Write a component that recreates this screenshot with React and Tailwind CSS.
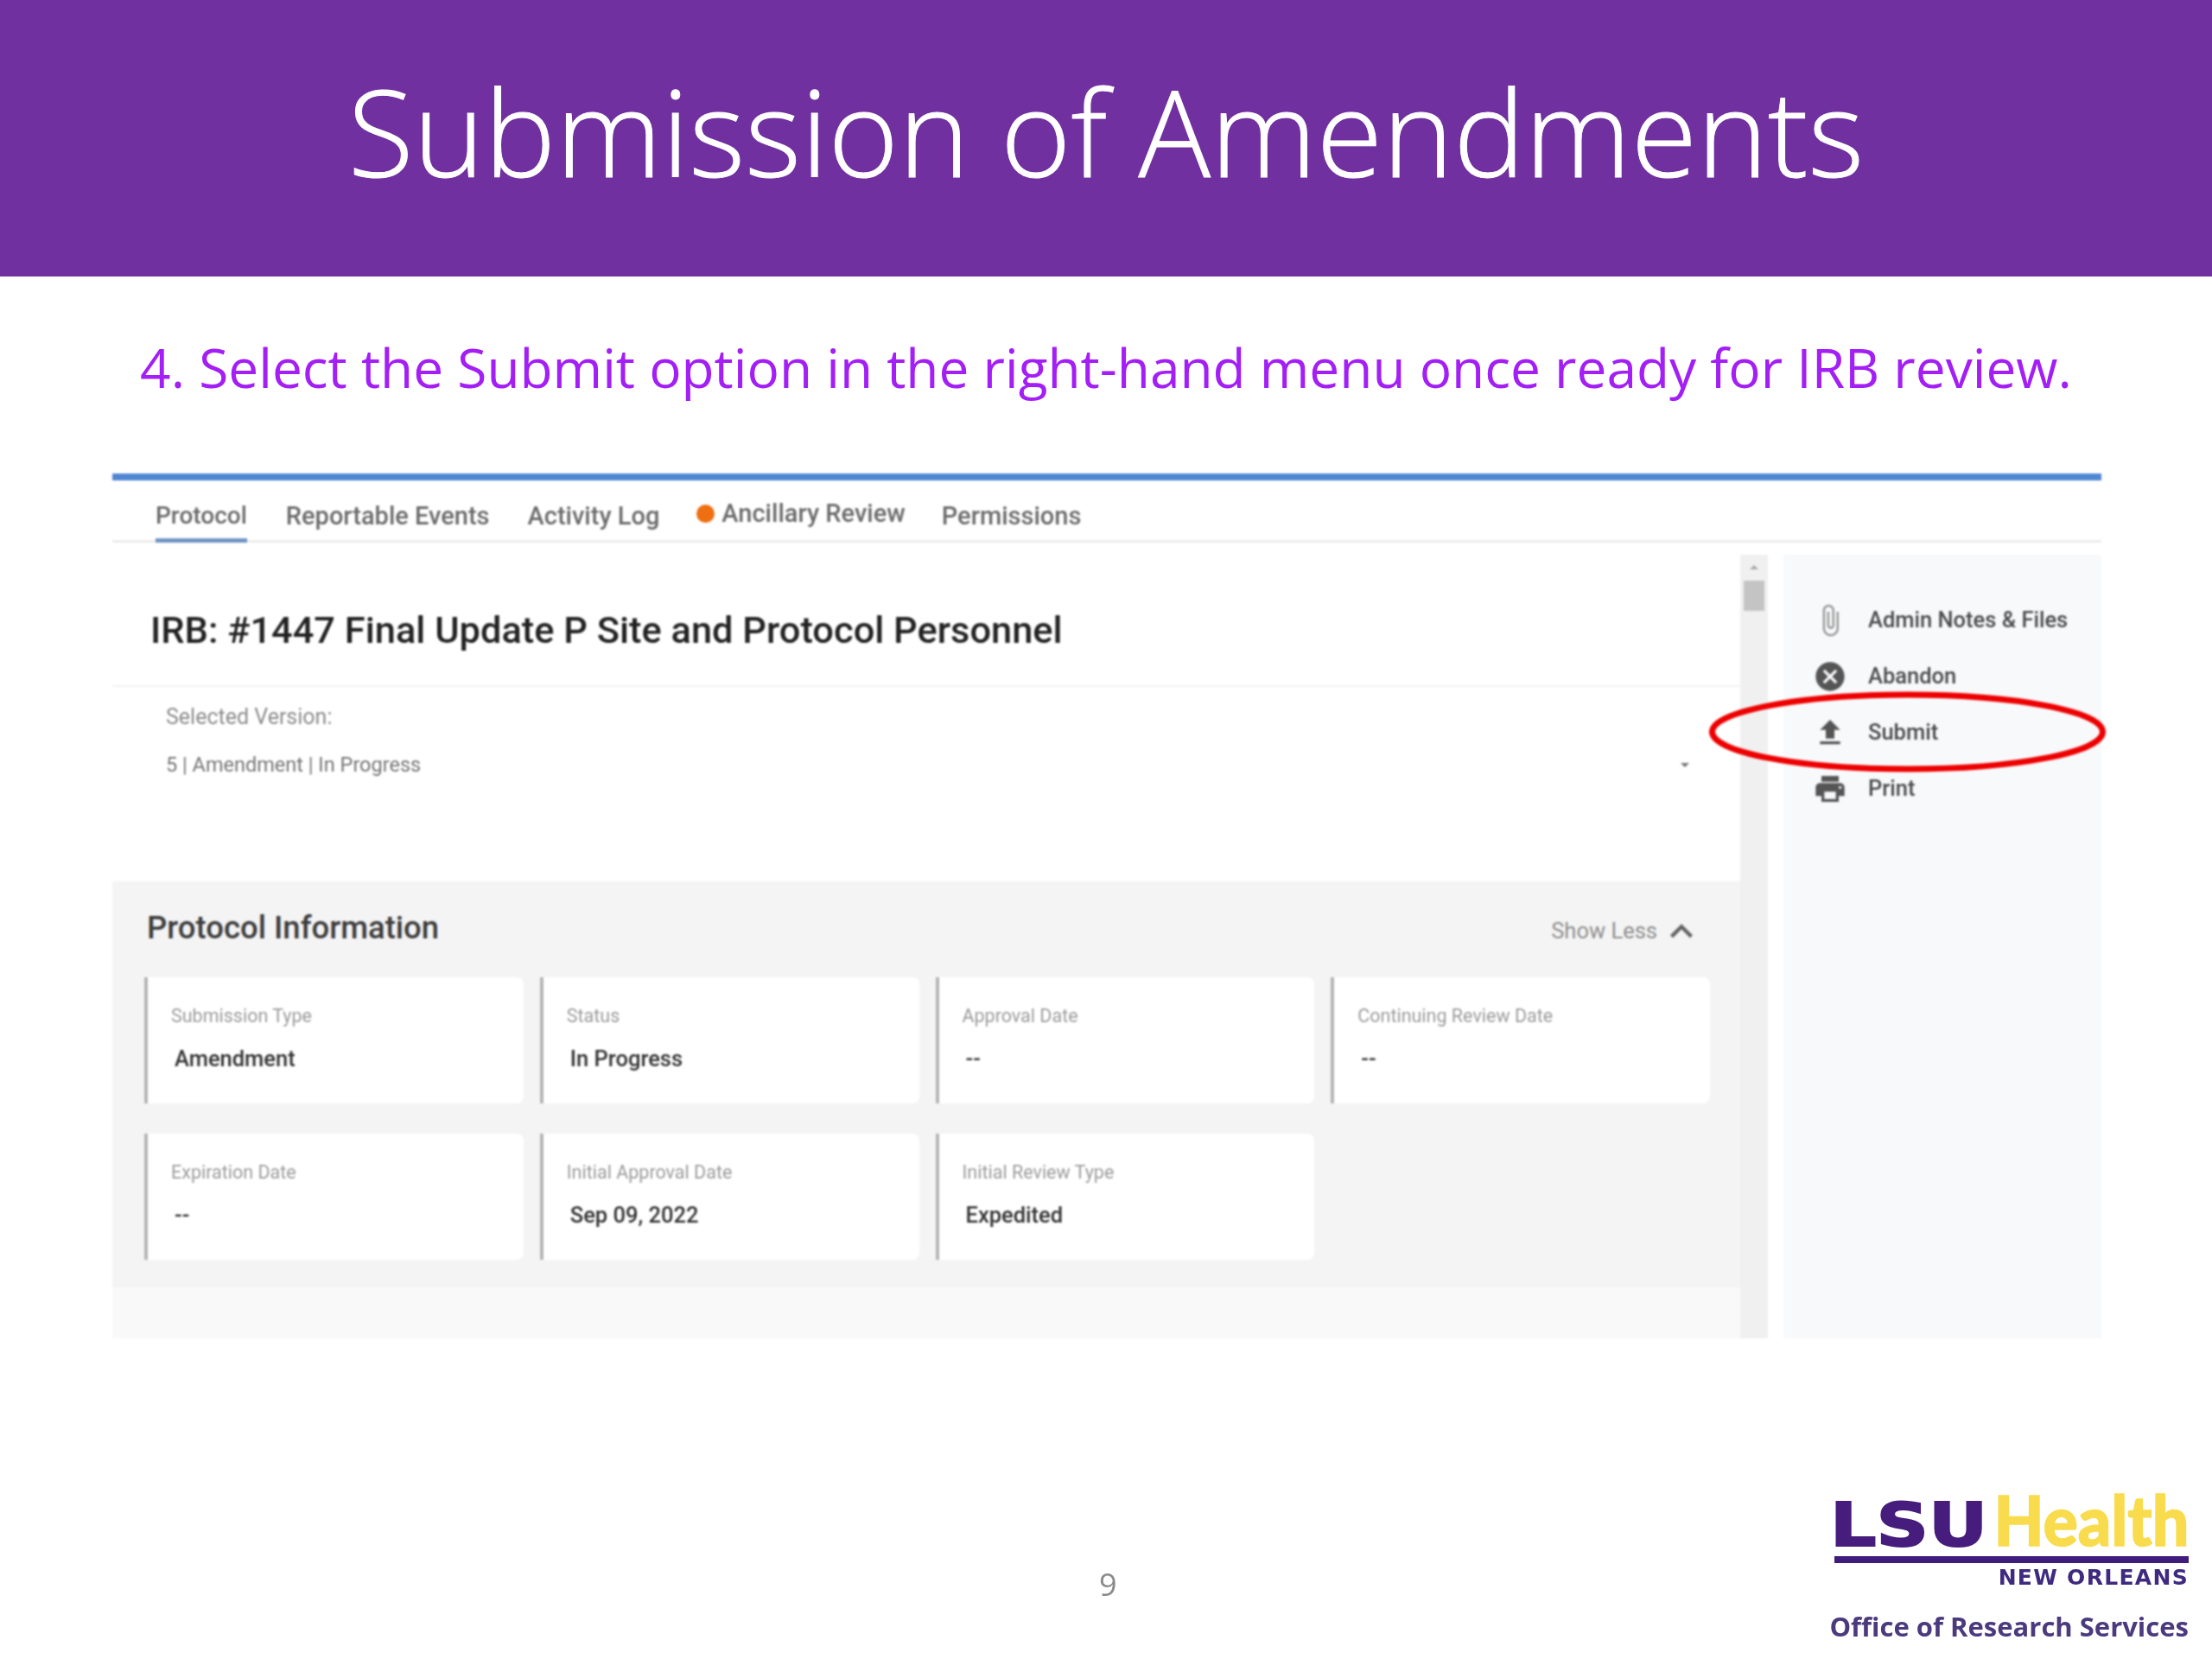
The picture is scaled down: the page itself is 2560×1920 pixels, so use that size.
import React from 'react';
import { MdAttachFile, MdCancel, MdFileUpload, MdPrint, MdKeyboardArrowUp, MdArrowDropDown, MdArrowDropUp } from 'react-icons/md';

const tabs = ['Reportable Events', 'Activity Log'];

const cards = [
  [
    { label: 'Submission Type', value: 'Amendment' },
    { label: 'Status', value: 'In Progress' },
    { label: 'Approval Date', value: '--' },
    { label: 'Continuing Review Date', value: '--' },
  ],
  [
    { label: 'Expiration Date', value: '--' },
    { label: 'Initial Approval Date', value: 'Sep 09, 2022' },
    { label: 'Initial Review Type', value: 'Expedited' },
  ],
];

const menu = [
  { label: 'Admin Notes & Files', icon: MdAttachFile, tone: 'text-[#9a9a9a]' },
  { label: 'Abandon', icon: MdCancel, tone: 'text-[#555555]' },
  { label: 'Submit', icon: MdFileUpload, tone: 'text-[#555555]' },
  { label: 'Print', icon: MdPrint, tone: 'text-[#555555]' },
];

const InfoCard = ({ label, value }) => (
  <div className="h-[146px] bg-white border-l-[4px] border-[#b5b5b5] rounded-r-lg pl-[27px] pt-[30px]">
    <div className="text-[21.5px] leading-[30px] text-[#9b9b9b]">{label}</div>
    <div className="mt-[19px] ml-[4px] text-[25.5px] leading-[30px] font-medium text-[#333333]">{value}</div>
  </div>
);

export default function App() {
  return (
    <div className="w-[2560px] h-[1920px] bg-white flex flex-col font-['Roboto',sans-serif]">
      <header className="h-[320px] bg-[#7030a0] flex items-center justify-center">
        <h1 className="font-['Open_Sans',sans-serif] font-light text-[139px] leading-none text-white pb-[17px] [-webkit-text-stroke:1px_white]">
          Submission of Amendments
        </h1>
      </header>

      <p className="h-[228px] pt-[68px] text-center font-['Open_Sans',sans-serif] text-[62.2px] leading-[74px] text-[#a31ff5]">
        4. Select the Submit option in the right-hand menu once ready for IRB review.
      </p>

      {/* pasted app screenshot */}
      <section className="relative ml-[130px] w-[2302px] h-[1001px] blur-[0.8px]">
        <div className="h-[8px] bg-[#4f86d2]" />
        <nav className="h-[72px] pl-[50px] flex border-b-[3px] border-[#ececec] text-[29px] font-medium text-[#6b6b6b]">
          <div className="h-[72px] flex items-center border-b-[5px] border-[#7094c4] pt-[14px] text-[28px]">Protocol</div>
          <div className="ml-[45px] h-[69px] flex items-center pt-[14px]">{tabs[0]}</div>
          <div className="ml-[44px] h-[69px] flex items-center pt-[14px]">{tabs[1]}</div>
          <div className="ml-[43px] h-[69px] flex items-center gap-[8px] pt-[8px]">
            <span className="w-[21px] h-[21px] rounded-full bg-[#ee6f12]" />
            Ancillary Review
          </div>
          <div className="ml-[42px] h-[69px] flex items-center pt-[14px]">Permissions</div>
        </nav>

        <div className="flex h-[921px]">
          <div className="w-[1884px] flex flex-col">
            <div className="h-[167px] border-b-[2px] border-[#f3f3f3] pl-[44px] pt-[78px]">
              <h2 className="text-[43.4px] leading-[48px] font-medium text-[#222222]">
                IRB: #1447 Final Update P Site and Protocol Personnel
              </h2>
            </div>
            <div className="h-[225px] pl-[62px] pr-[52px] pt-[20px]">
              <div className="text-[25px] leading-[30px] text-[#8c8c8c]">Selected Version:</div>
              <div className="mt-[25px] flex items-center justify-between">
                <span className="text-[23.5px] leading-[30px] text-[#757575]">5 | Amendment | In Progress</span>
                <MdArrowDropDown className="text-[#777777]" size={24} />
              </div>
            </div>
            <div className="h-[470px] bg-[#f4f4f4] pl-[37px] pr-[35px]">
              <div className="h-[111px] flex items-center justify-between pl-[3px] pr-[7px] pb-[2px]">
                <h3 className="text-[36.5px] font-medium text-[#3c3c3c]">Protocol Information</h3>
                <div className="flex items-center gap-[2px] text-[25.5px] text-[#8f8f8f] pt-[6px]">
                  Show Less
                  <MdKeyboardArrowUp className="text-[#666666]" size={52} />
                </div>
              </div>
              <div className="grid grid-cols-4 gap-x-[19px] gap-y-[35px]">
                {cards.flat().map((card) => (
                  <InfoCard key={card.label} {...card} />
                ))}
              </div>
            </div>
            <div className="flex-1 bg-[#f9f9f9]" />
          </div>

          <div className="w-[32px] mt-[14px] bg-[#f0f0f0] flex flex-col items-center">
            <MdArrowDropUp className="text-[#aaaaaa] mt-[3px]" size={24} />
            <div className="w-[24px] h-[35px] mt-[3px] bg-[#c4c4c4]" />
          </div>

          <aside className="ml-[18px] flex-1 mt-[14px] bg-[#f8f9fb] pl-[34px] pt-[43px]">
            {menu.map(({ label, icon: Icon, tone }) => (
              <div key={label} className="h-[65px] flex items-center">
                <Icon className={tone} size={40} />
                <span className="ml-[24px] text-[25.5px] font-medium text-[#4a4a4a]">{label}</span>
              </div>
            ))}
          </aside>
        </div>

        {/* red highlight around Submit */}
        <svg className="absolute left-[1848px] top-[252px]" width="459" height="94" viewBox="0 0 459 94">
          <ellipse cx="229.5" cy="47" rx="226" ry="43" fill="none" stroke="#ee0000" strokeWidth="7" />
        </svg>
      </section>

      <footer className="flex-1 relative flex">
        <div className="absolute left-[1272px] top-[261px] font-['Open_Sans',sans-serif] text-[36px] leading-[48px] text-[#8a8a8a]">9</div>
        <div className="ml-auto mr-[27px] mt-[181px] w-[416px] flex flex-col items-end blur-[0.6px]">
          <div className="w-[410px] h-[68px] flex items-end justify-between leading-none">
            <span className="-ml-[5px] -mb-[2px] origin-left scale-x-[1.2] font-['DejaVu_Sans',sans-serif] font-bold text-[70px] text-[#461d7c] [-webkit-text-stroke:2px_#461d7c]">LSU</span>
            <span className="origin-right scale-x-[0.94] font-['Lato',sans-serif] font-black text-[80px] text-[#f9dc4e] [-webkit-text-stroke:1.5px_#f9dc4e]">Health</span>
          </div>
          <div className="w-[410px] h-[8px] bg-[#3f1d7c] mt-[3px]" />
          <div className="mt-[2px] font-['DejaVu_Sans',sans-serif] font-bold text-[25px] leading-[30px] tracking-[1.3px] text-[#3f2a80]">NEW ORLEANS</div>
          <div className="mt-[21px] font-['Open_Sans',sans-serif] font-bold text-[31px] leading-[40px] text-[#4b3a7e] whitespace-nowrap">
            Office of Research Services
          </div>
        </div>
      </footer>
    </div>
  );
}
